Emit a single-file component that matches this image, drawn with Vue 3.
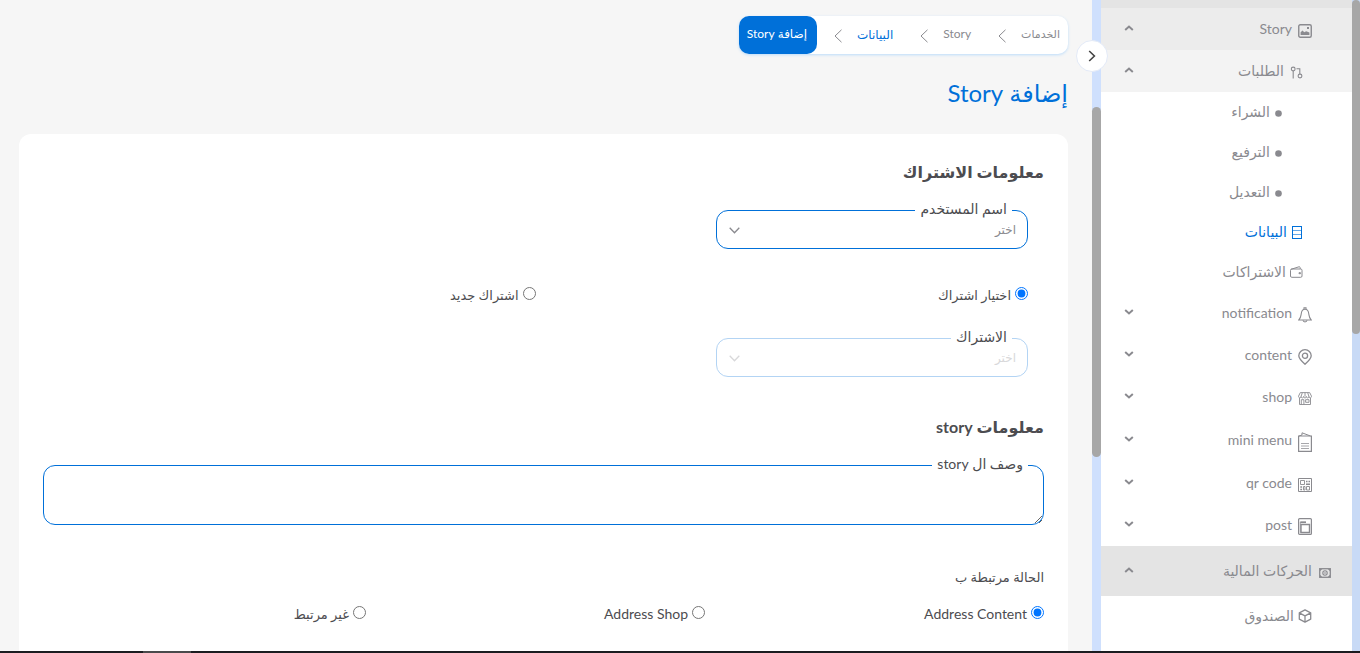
<script setup>
import { ref } from 'vue'

const menu = [
  { label: 'Story', icon: 'image', level: 'section', tone: 'tone-mid', arrow: 'up' },
  { label: 'الطلبات', icon: 'orders', level: 'group', tone: 'tone-light', arrow: 'up' },
  { label: 'الشراء', icon: 'dot', level: 'leaf' },
  { label: 'الترفيع', icon: 'dot', level: 'leaf' },
  { label: 'التعديل', icon: 'dot', level: 'leaf' },
  { label: 'البيانات', icon: 'data', level: 'sub', tone: 'active' },
  { label: 'الاشتراكات', icon: 'wallet', level: 'sub' },
  { label: 'notification', icon: 'bell', level: 'section', arrow: 'down' },
  { label: 'content', icon: 'pin', level: 'section', arrow: 'down' },
  { label: 'shop', icon: 'shop', level: 'section', arrow: 'down' },
  { label: 'mini menu', icon: 'menu', level: 'section', tone: 'tall', arrow: 'down' },
  { label: 'qr code', icon: 'qr', level: 'section', arrow: 'down' },
  { label: 'post', icon: 'post', level: 'section', arrow: 'down' },
  { label: 'الحركات المالية', icon: 'cash', level: 'root', tone: 'tone-dark', arrow: 'up' },
  { label: 'الصندوق', icon: 'box', level: 'plain' },
]

const crumbs = [
  { label: 'الخدمات', ar: true },
  { label: 'Story' },
  { label: 'البيانات', link: true },
]

const subscriptionMode = ref('pick')
const linkedTo = ref('content')
const user = ref('')
const subscription = ref('')
const description = ref('')
</script>

<template>
  <div class="page" dir="rtl" lang="ar">
    <div class="workspace">
      <div class="track"><div class="thumb thumb-page"></div></div>

      <aside class="sidebar">
        <div class="sidebar-cap"></div>
        <nav class="menu" aria-label="القائمة">
          <button
            v-for="item in menu"
            :key="item.label"
            type="button"
            class="row"
            :class="[item.level, item.tone]"
          >
            <span class="icon">
              <svg v-if="item.icon === 'image'" width="14" height="14" viewBox="0 0 14 14">
                <rect x=".75" y=".75" width="12.5" height="12.5" rx="1.5" fill="none" stroke="currentColor" stroke-width="1.4" />
                <path d="M2.6 11V8.2l2-1.600 1.600 1.600 2-1 3.200 1.400V11z" fill="currentColor" />
                <rect x="9" y="3" width="2" height="2" fill="currentColor" />
              </svg>
              <svg v-else-if="item.icon === 'orders'" width="13" height="13" viewBox="0 0 13 13" fill="none" stroke="currentColor" stroke-width="1.1">
                <circle cx="3.2" cy="3" r="1.9" /><path d="M3.2 5v7.5M6.5 2.7h3.300v5.200" />
                <circle cx="10" cy="10" r="1.9" />
              </svg>
              <svg v-else-if="item.icon === 'dot'" width="7" height="7" viewBox="0 0 7 7"><circle cx="3.5" cy="3.5" r="3.3" fill="currentColor" /></svg>
              <svg v-else-if="item.icon === 'data'" width="12" height="13" viewBox="0 0 12 13" fill="none" stroke="currentColor">
                <rect x="1.5" y=".5" width="9" height="12" /><path d="M2 4.500h8M2 8.500h8" opacity=".6" />
              </svg>
              <svg v-else-if="item.icon === 'wallet'" width="13" height="12" viewBox="0 0 13 12" fill="none" stroke="currentColor">
                <rect x=".5" y="3" width="11.5" height="8.3" rx="1.3" />
                <path d="M1 3.3 9.3.7q1 0 1 2.2" /><path d="M9 6.7h1.5v1H9z" />
              </svg>
              <svg v-else-if="item.icon === 'bell'" width="14" height="16" viewBox="0 0 14 16" fill="none" stroke="currentColor" stroke-width="1.100">
                <path d="M.8 13h12.4c-2-2-2-3.200-2.400-6C10.500 4 9.200 2.300 7 2.300S3.500 4 3.200 7c-.4 2.800-.4 4-2.400 6z" />
                <path d="M6 2.300V.8h2v1.500M5 13.200c.3 2.200 3.700 2.200 4 0" />
              </svg>
              <svg v-else-if="item.icon === 'pin'" width="14" height="16" viewBox="0 0 14 16" fill="none" stroke="currentColor" stroke-width="1.300">
                <path d="M7 15.200C3.500 12 .8 9.600.8 6.700a6.200 6 0 0 1 12.400 0c0 2.900-2.700 5.300-6.200 8.500z" />
                <circle cx="7" cy="6.800" r="2.600" />
              </svg>
              <svg v-else-if="item.icon === 'shop'" width="14" height="13" viewBox="0 0 14 13" fill="none" stroke="currentColor" stroke-width=".9">
                <path d="M2.300.6h9.400l1.800 3.600c0 2.200-2.600 2.200-2.600.2 0 2-2.600 2-2.600 0 0 2-2.600 2-2.600 0 0 2-2.600 2-2.600 0 0 2-2.600 2-2.600-.2zM4.300.8l-1.200 3.500M7 .6v3.700M9.700.8l1.200 3.500" />
                <path d="M1.500 6v6.500h11V6M3.300 12.400V7.700h2.600v4.700M7.600 7.700h3.400v2.600H7.600z" />
              </svg>
              <svg v-else-if="item.icon === 'menu'" width="14" height="20" viewBox="0 0 14 20" fill="none" stroke="currentColor">
                <path d="M.6 4h12.800v15.300H.6z" stroke-width="1.200" /><path d="M1 4 4 3V.8L12.500 4" />
                <path d="M3 11.500h8M3 14h8M3 16.500h8" opacity=".75" />
              </svg>
              <svg v-else-if="item.icon === 'qr'" width="14" height="14" viewBox="0 0 14 14" fill="none" stroke="currentColor">
                <path d="M.5.5h13v13H.5z" /><path d="M2.500 2.500h4v4h-4zM8.500 8.500h3v3.500h-3zM5.500 8.500h1.500V12H5.500z" stroke-width=".9" />
                <path d="M8 3.500h1.500M10.500 3.500H12M8 6.200h4M2.300 9h1.800M2.300 11.500h1.800" stroke-width="1.500" />
              </svg>
              <svg v-else-if="item.icon === 'post'" width="14" height="17" viewBox="0 0 14 17" fill="none" stroke="currentColor" stroke-width="1.200">
                <rect x=".6" y=".6" width="12.800" height="15.800" rx="1" />
                <path d="M3 6.500h8.500v8H3z" stroke-width="1.400" /><path d="M2.300 14.800V4" stroke-width=".7" /><path d="M2.300 4.200h5.700" stroke-width="1.700" />
              </svg>
              <svg v-else-if="item.icon === 'cash'" width="12" height="10" viewBox="0 0 12 10">
                <rect x=".7" y=".7" width="10.600" height="8.600" fill="none" stroke="currentColor" stroke-width="1.300" />
                <circle cx="6" cy="5" r="2.200" fill="none" stroke="currentColor" stroke-width="1.100" /><circle cx="6" cy="5" r=".8" fill="currentColor" />
                <path d="M1 1h2.200L1 3.200zM11 1H8.800L11 3.200zM1 9h2.200L1 6.800zM11 9H8.800L11 6.800z" fill="currentColor" />
              </svg>
              <svg v-else width="14" height="14" viewBox="0 0 14 14" fill="none" stroke="currentColor" stroke-width="1.300" stroke-linejoin="round">
                <path d="M7 .8 12.700 3.800v6.400L7 13.200 1.300 10.200V3.800zM1.300 3.800 7 6.800l5.700-3M7 6.800v6.400" />
              </svg>
            </span>
            <span class="row-label">{{ item.label }}</span>
            <svg v-if="item.arrow" class="arrow" width="10" height="6" viewBox="0 0 10 6" fill="none" stroke="currentColor" stroke-width="2">
              <path :d="item.arrow === 'up' ? 'M1.200 5 5 1.600 8.800 5' : 'M1.200 1 5 4.400 8.800 1'" />
            </svg>
          </button>
        </nav>
      </aside>

      <div class="track track-main">
        <div class="thumb thumb-main"></div>
        <button class="collapse" type="button" aria-label="طي القائمة">
          <svg width="8" height="12" viewBox="0 0 8 12" fill="none" stroke="currentColor" stroke-width="1.600"><path d="M1.200 1 6.400 6 1.200 11" /></svg>
        </button>
      </div>

      <main class="content">
        <nav class="crumbs" aria-label="مسار التنقل">
          <template v-for="c in crumbs" :key="c.label">
            <a href="#" class="crumb" :class="{ small: c.ar, link: c.link }">{{ c.label }}</a>
            <svg class="crumb-sep" width="8" height="14" viewBox="0 0 8 14" fill="none" stroke="currentColor"><path d="M7.500.8 1 7l6.500 6.200" /></svg>
          </template>
          <a href="#" class="crumb current" aria-current="page">إضافة Story</a>
        </nav>

        <h1 class="title">إضافة Story</h1>

        <form class="card" @submit.prevent>
          <h2 class="heading">معلومات الاشتراك</h2>
          <div class="inset">
            <div class="field">
              <select id="user" v-model="user" class="select"><option value="">اختر</option></select>
              <label for="user" class="field-label">اسم المستخدم</label>
              <svg class="caret" width="11" height="7" viewBox="0 0 11 7" fill="none" stroke="currentColor" stroke-width="1.300"><path d="M.7.8 5.500 5.800 10.300.8" /></svg>
            </div>

            <div class="radios two">
              <label class="radio ar"><input v-model="subscriptionMode" type="radio" name="mode" value="pick"><span>اختيار اشتراك</span></label>
              <label class="radio ar"><input v-model="subscriptionMode" type="radio" name="mode" value="new"><span>اشتراك جديد</span></label>
            </div>

            <div class="field disabled">
              <select id="subscription" v-model="subscription" class="select" disabled><option value="">اختر</option></select>
              <label for="subscription" class="field-label">الاشتراك</label>
              <svg class="caret" width="11" height="7" viewBox="0 0 11 7" fill="none" stroke="currentColor" stroke-width="1.300"><path d="M.7.8 5.500 5.800 10.300.8" /></svg>
            </div>
          </div>

          <h2 class="heading second">معلومات story</h2>
          <div class="field wide">
            <textarea id="description" v-model="description" class="area" dir="ltr"></textarea>
            <label for="description" class="field-label">وصف ال story</label>
          </div>

          <p id="linked" class="question ar">الحالة مرتبطة ب</p>
          <div class="radios three" role="radiogroup" aria-labelledby="linked">
            <label class="radio"><input v-model="linkedTo" type="radio" name="linked" value="content"><span>Address Content</span></label>
            <label class="radio"><input v-model="linkedTo" type="radio" name="linked" value="shop"><span>Address Shop</span></label>
            <label class="radio ar"><input v-model="linkedTo" type="radio" name="linked" value="none"><span>غير مرتبط</span></label>
          </div>
        </form>
      </main>
    </div>
    <div class="bottom-bar"><div class="bottom-mark"></div></div>
  </div>
</template>

<style>
body { margin: 0; overflow: hidden; }
</style>

<style scoped>
.page {
  display: flex;
  flex-direction: column;
  height: 100vh;
  overflow: hidden;
  background: #f6f6f6;
  color: #4c4c50;
  font-family: Lato, "DejaVu Sans", sans-serif;
  font-size: 14px;
}
.page *, .page { box-sizing: border-box; }
button, select, textarea { font-family: inherit; }
.workspace { display: flex; flex: 1; min-height: 0; }

.track { flex: none; width: 8px; background: #c8daf6; }
.track-main { position: relative; width: 9px; background: #cfe0fd; padding-top: 107px; }
.thumb { background: #a7a7a7; border-radius: 5px; }
.thumb-page { height: 334px; }
.thumb-main { height: 350px; }
.collapse {
  position: absolute;
  top: 40px;
  left: -16px;
  display: flex;
  align-items: center;
  justify-content: center;
  width: 32px;
  height: 32px;
  padding: 0;
  border: 1px solid #e3eaf7;
  border-radius: 50%;
  background: #fff;
  color: #444;
}

.sidebar { flex: none; width: 251px; overflow: hidden; background: #fff; }
.sidebar-cap { height: 8px; background: #e4e4e4; }
.menu { display: flex; flex-direction: column; }
.row {
  display: flex;
  flex: none;
  align-items: center;
  gap: 6px;
  height: 42px;
  padding: 0 40px 0 23px;
  border: 0;
  background: transparent;
  color: #8a8a8f;
  font-size: 14px;
  text-align: right;
}
.row.leaf, .row.sub, .row.plain { height: 40px; }
.row.tall { height: 44px; }
.row.leaf { padding-right: 70px; gap: 5px; }
.row.sub { padding-right: 49px; gap: 4px; }
.row.group { padding-right: 49px; }
.row.root { height: 50px; padding-right: 21px; gap: 7px; }
.row.plain { gap: 4px; }
.tone-mid { background: #ececec; }
.tone-light { background: #f3f3f3; }
.tone-dark { background: #e4e4e4; }
.row.active { color: #0070d9; }
.icon { display: flex; padding-top: 3px; }
.leaf .icon { padding-top: 2px; }
.sub .icon, .plain .icon { padding-top: 0; }
.row-label { flex: 1; padding-bottom: 1px; white-space: nowrap; }
.arrow { flex: none; margin-bottom: 3px; }

.content { flex: 1; min-width: 0; padding: 16px 24px 0 19px; }
.crumbs {
  display: flex;
  width: fit-content;
  height: 38px;
  padding-right: 8px;
  border-radius: 10px;
  background: #fff;
  box-shadow: 0 1px 3px #bcdcfa;
  color: #8a8a8f;
}
.crumb {
  color: inherit;
  font-size: 12px;
  line-height: 35px;
  text-decoration: none;
  white-space: nowrap;
}
.crumb.small { font-size: 11px; }
.crumb.link { color: #0070d9; line-height: 38px; }
.crumb-sep { align-self: center; margin: 2px 15px 0 27px; }
.crumb.link + .crumb-sep { margin-right: 15px; margin-left: 17px; }
.crumb-sep { margin-right: 15px; margin-left: 27px; }
.crumb.current {
  padding: 0 10px 0 8px;
  border-radius: 10px;
  background: #0070d9;
  color: #fff;
}
.title { margin: 24px 0 0; color: #0070d9; font-size: 24px; font-weight: 400; line-height: 30px; }

.card { min-height: 600px; margin-top: 26px; padding: 24px; border-radius: 12px; background: #fff; }
.heading { margin: 0; font-size: 16px; font-weight: 700; line-height: 28px; }
.heading.second { margin-top: 36px; }
.inset { padding: 24px 16px 0 0; }
.field { position: relative; width: 312px; }
.field.wide { width: 100%; margin-top: 24px; }
.select {
  display: block;
  width: 100%;
  height: 39px;
  padding: 0 11px 0 32px;
  border: 1px solid #0070d9;
  border-radius: 12px;
  background: #fff;
  color: #8a8a8f;
  font-size: 12px;
  appearance: none;
}
.disabled .select { border-color: #b3d4f4; color: #d8d8da; opacity: 1; }
.caret { position: absolute; top: 17px; left: 13px; color: #8a8a8f; pointer-events: none; }
.disabled .caret { color: #d8d8da; }
.field-label { position: absolute; top: -11px; right: 16px; padding: 0 5px; background: #fff; line-height: 20px; }
.area {
  display: block;
  width: 100%;
  height: 60px;
  padding: 12px;
  border: 1px solid #0070d9;
  border-radius: 12px;
  background: #fff;
  text-align: right;
  resize: vertical;
}
.radios { display: grid; }
.two { grid-template-columns: 1fr 1fr; margin: 36px 0 33px; }
.three { grid-template-columns: 1fr 1fr 1fr; gap: 16px; margin-top: 16px; }
.radio { display: flex; align-items: center; gap: 4px; line-height: 20px; white-space: nowrap; }
.radio input { width: 13px; height: 13px; margin: 0 0 3px; accent-color: #0075ff; }
.ar { font-size: 13px; }
.question { margin: 41px 0 0; line-height: 22px; }

.bottom-bar { flex: none; height: 2px; padding-left: 143px; background: #1b1c20; }
.bottom-mark { width: 48px; height: 2px; margin-right: auto; background: #4a4a4c; }
</style>
